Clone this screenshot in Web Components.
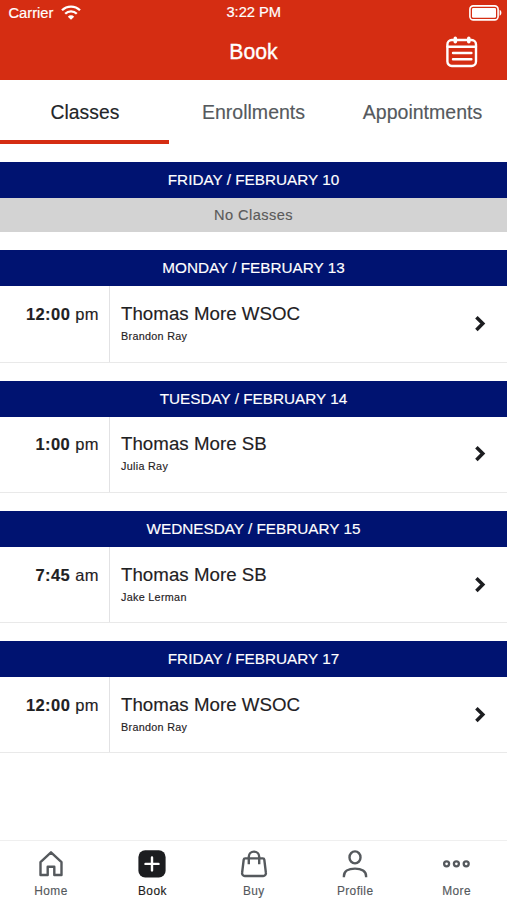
<!DOCTYPE html>
<html lang="en">
<head>
<meta charset="utf-8">
<meta name="viewport" content="width=device-width, initial-scale=1">
<title>Book</title>
<style>
  body {
    margin: 0;
    background: #fff;
    font-family: "Liberation Sans", Arial, sans-serif;
    color: #1f2123;
  }
</style>
</head>
<body>
<book-app></book-app>

<script>
  class StatusBar extends HTMLElement {
    connectedCallback() {
      this.attachShadow({ mode: "open" }).innerHTML = `
        <style>
          :host {
            display: grid;
            grid-template-columns: 1fr auto 1fr;
            align-items: center;
            height: 24px;
            padding: 0 5px 0 8.5px;
            font-size: 14.7px;
            color: #fff;
            -webkit-text-stroke: .2px #fff;
          }
          .left { display: flex; align-items: center; gap: 8px; padding-top: 1px; }
          .time { margin-left: -3px; }
          .battery { justify-self: end; padding-top: 1px; }
          svg { display: block; }
        </style>
        <div class="left">
          <span>Carrier</span>
          <svg width="20" height="15" viewBox="0 0 20 15" fill="none" stroke="#fff" stroke-width="2.3">
            <path d="M1 5.3a12.8 12.8 0 0 1 18 0M4.2 8.8a8.2 8.2 0 0 1 11.6 0"/>
            <path d="M10 14.8 6.8 11.7a4.5 4.5 0 0 1 6.4 0Z" fill="#fff" stroke="none"/>
          </svg>
        </div>
        <span class="time">3:22 PM</span>
        <svg class="battery" width="33" height="16" viewBox="0 0 33 16">
          <rect x=".9" y=".9" width="28.2" height="14" rx="3.4" fill="none" stroke="#fff" stroke-width="1.6"/>
          <rect x="3" y="3" width="24" height="9.8" rx="1.3" fill="#fff"/>
          <path d="M30.6 4.8c2.4.8 2.4 5.2 0 6Z" fill="#fff"/>
        </svg>
      `;
    }
  }

  class AppHeader extends HTMLElement {
    connectedCallback() {
      this.attachShadow({ mode: "open" }).innerHTML = `
        <style>
          :host { display: block; height: 80px; background: #d52d12; color: #fff; }
          .bar {
            display: grid;
            grid-template-columns: 1fr auto 1fr;
            align-items: center;
            height: 56px;
            padding: 0 29px;
          }
          h1 {
            grid-column: 2;
            margin: 0;
            font-size: 21.2px;
            font-weight: 400;
            -webkit-text-stroke: .35px #fff;
          }
          svg { display: block; justify-self: end; }
        </style>
        <status-bar></status-bar>
        <div class="bar">
          <h1><slot></slot></h1>
          <svg width="32" height="32" viewBox="0 0 32 32" fill="none" stroke="#fff" stroke-width="2.4" stroke-linecap="round">
            <rect x="1.4" y="4" width="28.6" height="26" rx="4.4"/>
            <path d="M1.5 10.8h28.4"/>
            <path d="M7 17h18.4M7 23.2h18.4"/>
            <path d="M9.3 2.4v3.4M22.8 2.4v3.4" stroke-width="3.6"/>
          </svg>
        </div>
      `;
    }
  }

  class TabBar extends HTMLElement {
    connectedCallback() {
      this.attachShadow({ mode: "open" }).innerHTML = `
        <style>
          :host {
            display: grid;
            grid-template-columns: repeat(3, 1fr);
            height: 64px;
            margin-bottom: 18px;
          }
          div {
            box-sizing: border-box;
            display: flex;
            align-items: center;
            justify-content: center;
            border-bottom: 4px solid transparent;
            padding-top: 4px;
            font-size: 19.55px;
            color: #55595d;
            -webkit-text-stroke: .15px;
          }
          .active {
            border-color: #d52d12;
            padding: 5px 0 0 1px;
            color: #222528;
            font-size: 19.3px;
            letter-spacing: .08px;
          }
        </style>
        <div class="active">Classes</div>
        <div>Enrollments</div>
        <div>Appointments</div>
      `;
    }
  }

  class DaySection extends HTMLElement {
    connectedCallback() {
      this.attachShadow({ mode: "open" }).innerHTML = `
        <style>
          :host { display: block; margin-bottom: 18px; }
          h2 {
            margin: 0;
            height: 36px;
            line-height: 36px;
            background: #001371;
            color: #fff;
            text-align: center;
            font-size: 15.3px;
            font-weight: 400;
            -webkit-text-stroke: .15px;
          }
        </style>
        <h2>${this.getAttribute("day")}</h2>
        <slot></slot>
      `;
    }
  }

  class EmptyDay extends HTMLElement {
    connectedCallback() {
      this.attachShadow({ mode: "open" }).innerHTML = `
        <style>
          :host {
            display: block;
            height: 34.4px;
            line-height: 34px;
            background: #d3d3d3;
            color: #5a5a5a;
            text-align: center;
            font-size: 14.6px;
            letter-spacing: .45px;
            -webkit-text-stroke: .15px;
          }
        </style>
        <slot></slot>
      `;
    }
  }

  class ClassRow extends HTMLElement {
    connectedCallback() {
      const [hour, period] = this.getAttribute("time").split(" ");
      this.attachShadow({ mode: "open" }).innerHTML = `
        <style>
          :host {
            box-sizing: border-box;
            display: grid;
            grid-template-columns: 110px 1fr auto;
            height: 76.25px;
            border-bottom: 1px solid #e9e9e9;
            -webkit-text-stroke: .15px;
          }
          .time {
            box-sizing: border-box;
            border-right: 1.5px solid #e2e2e4;
            padding: 16.8px 10px 0 0;
            text-align: right;
            font-size: 16.5px;
            line-height: 22px;
            letter-spacing: .42px;
          }
          .info { padding: 16.8px 0 0 11px; }
          .name { font-size: 18.7px; line-height: 22px; letter-spacing: .03px; }
          .teacher { margin-top: 3px; font-size: 10.8px; line-height: 16px; letter-spacing: .3px; }
          svg { display: block; align-self: center; margin-right: 20px; }
        </style>
        <div class="time"><b>${hour}</b> ${period}</div>
        <div class="info">
          <div class="name">${this.getAttribute("name")}</div>
          <div class="teacher">${this.getAttribute("teacher")}</div>
        </div>
        <svg width="13" height="18" viewBox="0 0 13 18" fill="none" stroke="#1c1d20" stroke-width="3.5">
          <path d="M2.4 2.2 8.8 8.6l-6.4 6.4"/>
        </svg>
      `;
    }
  }

  const icons = {
    home: `<path d="M4.5 26V13.2L15 3.3l10.5 9.9V26h-7.2v-8.2h-6.6V26Z" stroke-linejoin="round"/>`,
    book: `<rect x="1.4" y="1.3" width="27.2" height="27.2" rx="6.8" fill="#1c1d20" stroke="none"/>
           <path d="M15 8.4v13M8.5 14.9h13" stroke="#fff" stroke-width="2.4" stroke-linecap="round"/>`,
    buy: `<path d="M6.2 9.4h17.6a1.5 1.5 0 0 1 1.5 1.3l1.6 13.2a2.7 2.7 0 0 1-2.7 3.1H5.8a2.7 2.7 0 0 1-2.7-3.1l1.6-13.2a1.5 1.5 0 0 1 1.5-1.3Z"/>
          <path d="M9.8 15.2V7.8a5.2 5.2 0 0 1 10.4 0v7.4"/>`,
    profile: `<ellipse cx="15" cy="8.4" rx="5.5" ry="6"/>
              <path d="M3.9 28.2v-1c0-4.8 4.4-7.6 11.1-7.6s11.1 2.8 11.1 7.6v1"/>`,
    more: `<g stroke-width="2.3"><circle cx="4.6" cy="14.8" r="2.5"/><circle cx="14.4" cy="14.8" r="2.5"/><circle cx="24.2" cy="14.8" r="2.5"/></g>`
  };

  class NavItem extends HTMLElement {
    connectedCallback() {
      this.attachShadow({ mode: "open" }).innerHTML = `
        <style>
          :host {
            display: flex;
            flex-direction: column;
            align-items: center;
            padding: 8px 0 0 .6px;
            color: #55595d;
            font-size: 11.9px;
            letter-spacing: .4px;
            -webkit-text-stroke: .15px;
          }
          :host([active]) { color: #1c1d20; }
          svg { display: block; }
          span { line-height: 14px; margin-top: 5px; }
        </style>
        <svg width="30" height="30" viewBox="0 0 30 30" fill="none" stroke="#55595d" stroke-width="2.4">
          ${icons[this.getAttribute("icon")]}
        </svg>
        <span><slot></slot></span>
      `;
    }
  }

  class BottomNav extends HTMLElement {
    connectedCallback() {
      this.attachShadow({ mode: "open" }).innerHTML = `
        <style>
          :host {
            box-sizing: border-box;
            display: grid;
            grid-template-columns: repeat(5, 1fr);
            height: 60px;
            border-top: 1px solid #efefef;
          }
        </style>
        <nav-item icon="home">Home</nav-item>
        <nav-item icon="book" active>Book</nav-item>
        <nav-item icon="buy">Buy</nav-item>
        <nav-item icon="profile">Profile</nav-item>
        <nav-item icon="more">More</nav-item>
      `;
    }
  }

  class BookApp extends HTMLElement {
    connectedCallback() {
      this.attachShadow({ mode: "open" }).innerHTML = `
        <style>
          :host { display: flex; flex-direction: column; height: 100vh; overflow: hidden; }
          app-header, tab-bar, bottom-nav { flex: none; }
          main { flex: 1; min-height: 0; }
        </style>
        <app-header>Book</app-header>
        <tab-bar></tab-bar>
        <main>
          <day-section day="FRIDAY / FEBRUARY 10">
            <empty-day>No Classes</empty-day>
          </day-section>
          <day-section day="MONDAY / FEBRUARY 13">
            <class-row time="12:00 pm" name="Thomas More WSOC" teacher="Brandon Ray"></class-row>
          </day-section>
          <day-section day="TUESDAY / FEBRUARY 14">
            <class-row time="1:00 pm" name="Thomas More SB" teacher="Julia Ray"></class-row>
          </day-section>
          <day-section day="WEDNESDAY / FEBRUARY 15">
            <class-row time="7:45 am" name="Thomas More SB" teacher="Jake Lerman"></class-row>
          </day-section>
          <day-section day="FRIDAY / FEBRUARY 17">
            <class-row time="12:00 pm" name="Thomas More WSOC" teacher="Brandon Ray"></class-row>
          </day-section>
        </main>
        <bottom-nav></bottom-nav>
      `;
    }
  }

  customElements.define("status-bar", StatusBar);
  customElements.define("app-header", AppHeader);
  customElements.define("tab-bar", TabBar);
  customElements.define("day-section", DaySection);
  customElements.define("empty-day", EmptyDay);
  customElements.define("class-row", ClassRow);
  customElements.define("nav-item", NavItem);
  customElements.define("bottom-nav", BottomNav);
  customElements.define("book-app", BookApp);
</script>
</body>
</html>
